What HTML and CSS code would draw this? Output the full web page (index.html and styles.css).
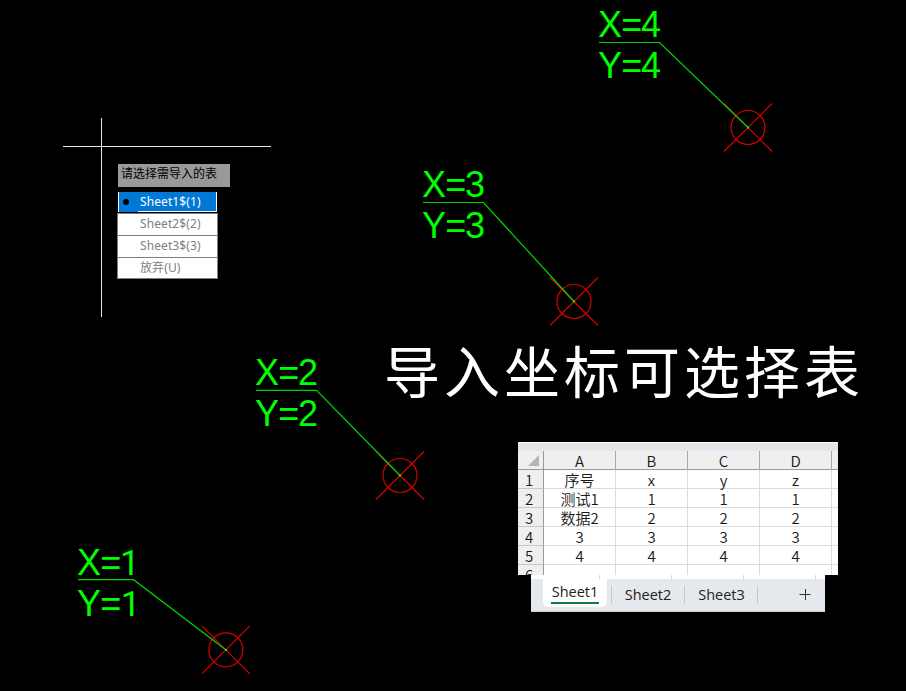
FILE: index.html
```html
<!DOCTYPE html>
<html lang="zh-CN">
<head>
<meta charset="utf-8">
<title>导入坐标可选择表</title>
<link rel="stylesheet" href="styles.css">
</head>
<body>
<main class="canvas">
  <svg class="drawing" width="906" height="691" viewBox="0 0 906 691">
    <defs>
      <g id="target">
        <circle r="17"/>
        <path d="M-24 -24L24 24M-24 24L24 -24"/>
      </g>
    </defs>
    <g class="cursor"><path d="M63 146.5H271M101.5 118V317"/></g>
    <g class="targets">
      <use href="#target" x="748" y="127.5"/>
      <use href="#target" x="574" y="301.5"/>
      <use href="#target" x="400" y="475.5"/>
      <use href="#target" x="225.800" y="649.800"/>
    </g>
    <g class="leaders">
      <path d="M599 42.500H659.500L748 127.500"/>
      <path d="M423 202.500H483.500L574 301.500"/>
      <path d="M256 390.300H316.500L400 475.500"/>
      <path d="M78 579.700H133.500L225.800 649.800"/>
    </g>
    <g class="dots">
      <rect x="747" y="126.500" width="2" height="2"/>
      <rect x="573" y="300.500" width="2" height="2"/>
      <rect x="399" y="474.500" width="2" height="2"/>
      <rect x="225" y="649" width="2" height="2"/>
    </g>
    <g class="labels">
      <text x="598 621.300 641" y="37">X=4</text><text x="598 621.300 641" y="78">Y=4</text>
      <text x="422 445.300 465" y="197">X=3</text><text x="422 445.300 465" y="238">Y=3</text>
      <text x="255 278.300 298" y="385">X=2</text><text x="255 278.300 298" y="426">Y=2</text>
      <text x="77 100.300" y="575">X=<tspan class="one" x="120">1</tspan></text>
      <text x="77 100.300" y="616">Y=<tspan class="one" x="120.800">1</tspan></text>
    </g>
  </svg>

  <section class="prompt">
    <div class="prompt-title">请选择需导入的表</div>
    <ul class="options">
      <li class="option selected"><span>Sheet1$(1)</span></li>
      <li class="option"><span>Sheet2$(2)</span></li>
      <li class="option"><span>Sheet3$(3)</span></li>
      <li class="option cancel"><span>放弃(U)</span></li>
    </ul>
  </section>

  <h1 class="headline">导入坐标可选择表</h1>

  <section class="workbook">
    <div class="sheet">
      <div class="sheet-top"></div>
      <div class="row head"><b class="corner"></b><i>A</i><i>B</i><i>C</i><i>D</i><i></i></div>
      <div class="row"><b>1</b><i>序号</i><i>x</i><i>y</i><i>z</i><i></i></div>
      <div class="row"><b>2</b><i>测试1</i><i>1</i><i>1</i><i>1</i><i></i></div>
      <div class="row"><b>3</b><i>数据2</i><i>2</i><i>2</i><i>2</i><i></i></div>
      <div class="row"><b>4</b><i>3</i><i>3</i><i>3</i><i>3</i><i></i></div>
      <div class="row"><b>5</b><i>4</i><i>4</i><i>4</i><i>4</i><i></i></div>
      <div class="row"><b>6</b><i></i><i></i><i></i><i></i><i></i></div>
    </div>
    <nav class="tabs">
      <div class="tab active"><span>Sheet1</span></div>
      <div class="tab"><span>Sheet2</span></div>
      <div class="tab"><span>Sheet3</span></div>
      <svg class="plus" width="12" height="12" viewBox="0 0 12 12"><path d="M.5 6.500H11.500M6.500 1V12"/></svg>
    </nav>
  </section>
</main>
</body>
</html>
```
FILE: styles.css
```css
* { box-sizing: border-box; }
body { margin: 0; background: #000; overflow: hidden; }
.canvas { position: relative; width: 906px; height: 691px; background: #000; }
.drawing { display: block; }
.cursor { stroke: #e8e8e8; fill: none; }
.targets { stroke: #d60000; stroke-width: 1.2; fill: none; }
.leaders { stroke: #00d400; stroke-width: 1.2; fill: none; }
.dots { fill: #0f0; }
.labels { fill: #0f0; font: 36px "Liberation Sans", Arial, sans-serif; }
.labels .one { font: 35px Roboto, sans-serif; }

.prompt {
  position: absolute; left: 117px; top: 164px; width: 113px;
  font: 12px/20px "Noto Sans", "Noto Sans CJK SC", sans-serif;
}
.prompt-title {
  height: 23px; margin-left: 1px; padding-left: 3px;
  background: #999; color: #000; white-space: nowrap;
}
.options { width: 101px; margin: 5px 0 0; padding: 0; list-style: none; }
.option {
  display: flex; height: 22px; padding-left: 22px;
  border: 1px solid #808080; border-bottom: 0;
  background: #fff; color: #808080; white-space: nowrap;
}
.option span { letter-spacing: .1px; }
.option.cancel { border-bottom: 1px solid #808080; }
.option.selected {
  height: 20px; margin: 0 1px 1px 1px; padding-left: 4px; align-items: center;
  border: solid #fff; border-width: 0 1px;
  background: #0078d7; color: #fff;
}
.option.selected::before { content: ""; width: 6px; height: 6px; border-radius: 50%; background: #000; }
.option.selected span { height: 20px; flex: 1; padding-left: 2px; margin-left: 9px; border-bottom: 1px solid #fff; }

.headline {
  position: absolute; left: 384px; top: 331px; margin: 0;
  color: #fff; white-space: nowrap; letter-spacing: 4px;
  font: 400 56px/76px KaiTi, STKaiti, "Noto Sans CJK SC", sans-serif;
}

.workbook { position: absolute; left: 518px; top: 442px; width: 320px; }
.sheet {
  height: 133px; overflow: hidden; background: #fff; color: #181818;
  font: 300 15px/16px "Noto Sans CJK SC", sans-serif;
}
.sheet-top { height: 9px; background: #e6e6ea; border-top: 1px solid #fff; }
.row { display: grid; grid-template-columns: 26px repeat(4, 72px) 6px; height: 19px; }
.row b, .row i {
  display: flex; justify-content: center; height: 19px; padding-top: 2px;
  border-right: 1px solid #dcdcdc; border-bottom: 1px solid #dcdcdc;
  font-style: normal; font-weight: 350; white-space: nowrap;
}
.row > :last-child { border-right: 0; }
.row b { background: #efefef; border-right-color: #999; border-bottom-color: #c8c8c8; padding-right: 3px; }
.row.head i { background: #efefef; border-right-color: #aaa; border-bottom-color: #999; }
.row.head b { border-bottom-color: #999; }
.head .corner { padding: 4px 0 0; }
.corner::before {
  content: ""; width: 11px; height: 11px; margin-left: 6px;
  background: #b5b5b5; clip-path: polygon(100% 0, 100% 100%, 0 100%);
}

.tabs {
  display: flex; width: 294px; height: 37px; margin-left: 13px;
  border-top: 4px solid #fff; border-bottom: 1px solid #cbcdd0;
  background:
    repeating-linear-gradient(90deg, #fff 0 68px, #dcdcdc 68px 69px, #fff 69px 72px) 0 0 / 100% 4px no-repeat border-box,
    #e5e8ec;
  border-top-color: transparent;
  color: #222; font: 14.500px/20px "Open Sans", "Noto Sans", sans-serif;
}
.tab { display: flex; justify-content: center; width: 73px; padding-top: 6px; position: relative; }
.tab:not(.active)::after { content: ""; position: absolute; right: 0; top: 7px; width: 1px; height: 18px; background: #c6c8cb; }
.tab span { letter-spacing: -.05px; }
.tab.active { width: 64px; height: 28px; margin: 0 4px 0 12px; padding-top: 3px; background: #fff; border-radius: 0 0 5px 5px; }
.tab.active + .tab { width: 74px; }
.tab.active + .tab::before { content: ""; position: absolute; left: 0; top: 7px; width: 1px; height: 18px; background: #c6c8cb; }
.tab.active span { height: 22px; padding: 0 1px; border-bottom: 2px solid #107c41; }
.plus { margin: 9px 0 0 41px; stroke: #333; fill: none; }
```
